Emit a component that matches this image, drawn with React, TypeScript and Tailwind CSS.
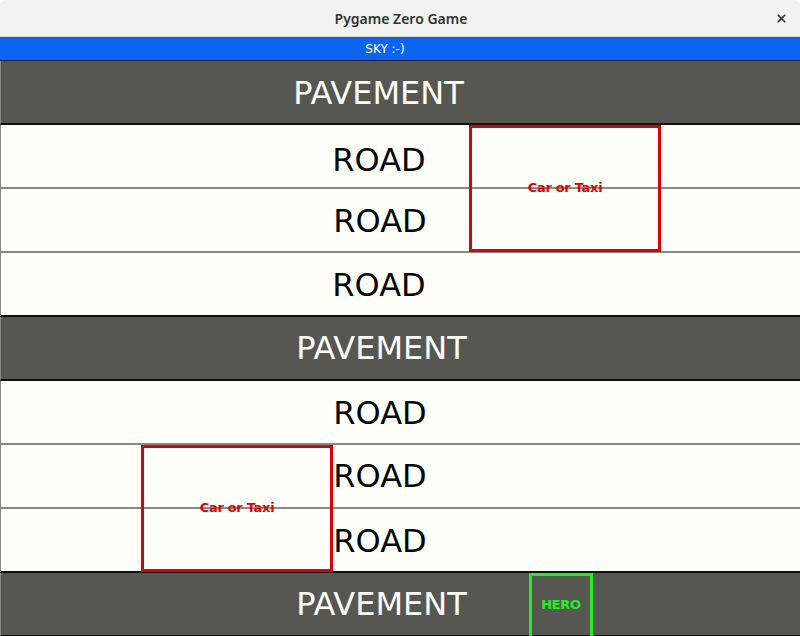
import { X } from "lucide-react";

type Lane = { kind: "pave" | "road"; pad: string };

const lanes: Lane[] = [
  { kind: "pave", pad: "pr-[44px] pt-[1px]" },
  { kind: "road", pad: "pr-[43px] pt-[8px]" },
  { kind: "road", pad: "pr-[41px] pt-[2px]" },
  { kind: "road", pad: "pr-[43px] pt-[1px]" },
  { kind: "pave", pad: "pr-[38px] pt-0" },
  { kind: "road", pad: "pr-[41px] pt-[2px]" },
  { kind: "road", pad: "pr-[41px] pt-0" },
  { kind: "road", pad: "pr-[41px] pt-[1px]" },
  { kind: "pave", pad: "pr-[38px] pt-0" },
];

const Row = ({ lane, next }: { lane: Lane; next?: Lane }) => {
  const pave = lane.kind === "pave";
  const bottom = pave || next?.kind === "pave" ? "border-b-2 border-b-[#111]" : "border-b-2 border-b-[#8a8a85]";
  return (
    <div
      className={`h-16 flex items-center justify-center border-l border-l-[#8a8a85] ${bottom} ${lane.pad} ${
        pave ? "bg-[#575752] text-white" : "bg-[#fffffa] text-black"
      }`}
    >
      <span className="text-[32px] leading-none">{pave ? "PAVEMENT" : "ROAD"}</span>
    </div>
  );
};

const Car = ({ x, y }: { x: number; y: number }) => (
  <div
    className="absolute w-[192px] h-[127px] border-[3px] border-[#dd0000] flex items-center justify-center"
    style={{ left: x, top: y }}
  >
    <span className="text-[13px] font-bold tracking-[-0.3px] text-[#dd0000] -mt-[2px]">Car or Taxi</span>
  </div>
);

export default function App() {
  return (
    <div className="w-[800px] h-[636px] overflow-hidden bg-[#fffffa] font-['DejaVu_Sans',sans-serif]">
      <div className="h-[37px] bg-[#f2f2f0] rounded-t-[6px] border-b border-b-[#d8d8d4] relative flex items-center justify-center">
        <span className="font-['Noto_Sans',sans-serif] font-semibold text-[14px] text-[#2e3436] pl-[2px]">
          Pygame Zero Game
        </span>
        <X className="absolute right-[12px] top-[12px] w-[13px] h-[13px] text-[#2e3436]" strokeWidth={3.2} />
      </div>
      <div className="h-[24px] bg-[#0a64f0] border-b border-b-[#0a1a40] flex items-center justify-center pr-[30px]">
        <span className="text-white text-[12px]">SKY :-)</span>
      </div>
      <div className="relative">
        {lanes.map((l, i) => (
          <Row key={i} lane={l} next={lanes[i + 1]} />
        ))}
        <Car x={469} y={64} />
        <Car x={141} y={384} />
        <div className="absolute left-[529px] top-[512px] w-[64px] h-[66px] border-[3px] border-[#22ee22] flex items-center justify-center">
          <span className="text-[13px] font-bold tracking-[-0.3px] text-[#22ee22] -mt-[2px]">HERO</span>
        </div>
      </div>
    </div>
  );
}
